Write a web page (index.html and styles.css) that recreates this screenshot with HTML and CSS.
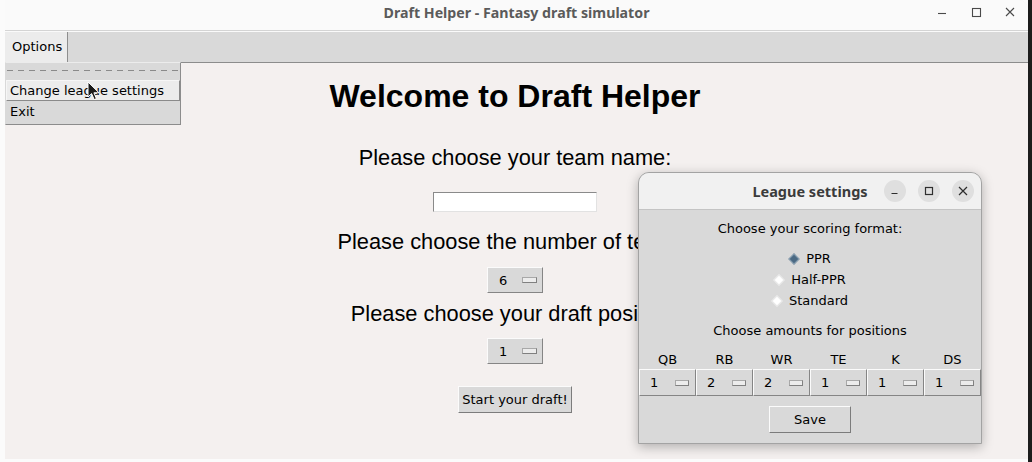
FILE: index.html
```html
<!DOCTYPE html>
<html>
<head>
<meta charset="utf-8">
<title>Draft Helper</title>
<link rel="stylesheet" href="styles.css">
</head>
<body>
<div class="screen">
  <div class="window">
    <header class="titlebar">
      <span></span>
      <span class="title">Draft Helper - Fantasy draft simulator</span>
      <div class="wm-controls">
        <svg class="wm-icon" viewBox="0 0 16 16"><path d="M4 8.5h8"/></svg>
        <svg class="wm-icon" viewBox="0 0 16 16"><rect x="4.5" y="3.5" width="8" height="8"/></svg>
        <svg class="wm-icon" viewBox="0 0 16 16"><path d="M4 3l8 8M12 3l-8 8"/></svg>
      </div>
    </header>
    <nav class="menubar">
      <div class="menu-btn">Options</div>
    </nav>
    <main class="content">
      <h1 class="heading">Welcome to Draft Helper</h1>
      <p class="label label-team">Please choose your team name:</p>
      <div class="entry"></div>
      <p class="label label-teams">Please choose the number of teams:</p>
      <div class="optmenu optmenu-main optmenu-teams"><span class="opt-val">6</span><i class="ind"></i></div>
      <p class="label label-pos">Please choose your draft position:</p>
      <div class="optmenu optmenu-main optmenu-pos"><span class="opt-val">1</span><i class="ind"></i></div>
      <div class="tk-button start-btn">Start your draft!</div>
    </main>
  </div>
  <div class="edge"></div>

  <div class="dropdown">
    <div class="tearoff"><div class="dash"></div></div>
    <div class="menu-item active">Change league settings</div>
    <div class="menu-item">Exit</div>
  </div>

  <section class="dialog">
    <header class="dlg-head">
      <span class="dlg-title">League settings</span>
      <div class="dlg-controls">
        <span class="dlg-circle"><svg viewBox="0 0 12 12"><path d="M2.5 8.5h6"/></svg></span>
        <span class="dlg-circle"><svg viewBox="0 0 12 12"><rect x="2.5" y="2.5" width="7" height="7"/></svg></span>
        <span class="dlg-circle"><svg viewBox="0 0 12 12"><path d="M2 2l8 8M10 2l-8 8"/></svg></span>
      </div>
    </header>
    <div class="dlg-body">
      <div class="dlg-line">Choose your scoring format:</div>
      <div class="radios">
        <div class="radio"><i class="diamond on"></i><span>PPR</span></div>
        <div class="radio"><i class="diamond"></i><span>Half-PPR</span></div>
        <div class="radio"><i class="diamond"></i><span>Standard</span></div>
      </div>
      <div class="dlg-line amounts">Choose amounts for positions</div>
      <div class="positions">
        <div class="pos"><div class="pos-label">QB</div><div class="optmenu optmenu-dlg"><span class="opt-val">1</span><i class="ind"></i></div></div>
        <div class="pos"><div class="pos-label">RB</div><div class="optmenu optmenu-dlg"><span class="opt-val">2</span><i class="ind"></i></div></div>
        <div class="pos"><div class="pos-label">WR</div><div class="optmenu optmenu-dlg"><span class="opt-val">2</span><i class="ind"></i></div></div>
        <div class="pos"><div class="pos-label">TE</div><div class="optmenu optmenu-dlg"><span class="opt-val">1</span><i class="ind"></i></div></div>
        <div class="pos"><div class="pos-label">K</div><div class="optmenu optmenu-dlg"><span class="opt-val">1</span><i class="ind"></i></div></div>
        <div class="pos"><div class="pos-label">DS</div><div class="optmenu optmenu-dlg"><span class="opt-val">1</span><i class="ind"></i></div></div>
      </div>
      <div class="tk-button save-btn">Save</div>
    </div>
  </section>

  <svg class="cursor" viewBox="0 0 13 20" width="13" height="20"><path d="M1 1v15l3.6-3.4 2.6 6 2.2-1-2.5-5.8H12z"/></svg>
</div>
</body>
</html>
```

FILE: styles.css
```css
* { box-sizing: border-box; }

html, body {
  margin: 0;
  padding: 0;
}

body {
  width: 1032px;
  height: 462px;
  overflow: hidden;
  background: #fbfbfb;
  font-family: "DejaVu Sans", sans-serif;
  font-size: 13px;
  color: #000;
}

.screen {
  position: relative;
  display: flex;
  width: 1032px;
  height: 462px;
}

.window {
  margin-left: 5px;
  width: 1023px;
  height: 459px;
  display: flex;
  flex-direction: column;
  background: #f4f0ef;
  border-top-right-radius: 9px;
  overflow: hidden;
}

.edge {
  flex: 1;
  background: #1c1c1c;
}

/* title bar */
.titlebar {
  height: 31px;
  padding-bottom: 5px;
  background: #fafafa;
  border-bottom: 1px solid #d4d4d4;
  display: grid;
  grid-template-columns: 1fr auto 1fr;
  align-items: center;
}

.title {
  font-family: "Noto Sans", sans-serif;
  font-weight: 700;
  font-size: 14.2px;
  color: #5b5b5b;
}

.wm-controls {
  justify-self: end;
  display: flex;
  gap: 18px;
  padding-right: 10px;
}

.wm-icon {
  width: 16px;
  height: 16px;
  fill: none;
  stroke: #4a4a4a;
  stroke-width: 1.1;
}

/* menubar */
.menubar {
  height: 32px;
  border-top: 1px solid #fafafa;
  background: #d9d9d9;
  border-bottom: 1px solid #8c8c8c;
  display: flex;
}

.menu-btn {
  width: 63px;
  padding-left: 7px;
  line-height: 29px;
  background: #ececec;
  border-right: 1px solid #8e8e8e;
}

/* main content */
.content {
  flex: 1;
  display: flex;
  flex-direction: column;
  align-items: center;
  padding-right: 3px;
}

.heading {
  margin: 15px 0 0;
  font-family: "Liberation Sans", Arial, sans-serif;
  font-weight: 700;
  font-size: 32px;
  line-height: 37px;
  white-space: nowrap;
}

.label {
  margin: 0;
  font-family: "Liberation Sans", Arial, sans-serif;
  font-size: 21.8px;
  line-height: 25px;
  white-space: nowrap;
}

.label-team { margin-top: 30px; }
.label-teams { margin-top: 17px; }
.label-pos { margin-top: 8px; }

.entry {
  margin-top: 22px;
  width: 164px;
  height: 20px;
  background: #fff;
  border: 1px solid;
  border-color: #8a8a8a #e2e2e2 #e2e2e2 #8a8a8a;
}

.optmenu {
  display: flex;
  align-items: center;
  justify-content: space-between;
  background: #d9d9d9;
  border: 1px solid;
  border-color: #fbfbfb #858585 #858585 #fbfbfb;
}

.optmenu-main {
  width: 56px;
  height: 26px;
  padding: 0 5px 0 11px;
}

.optmenu-teams { margin-top: 13px; }
.optmenu-pos { margin-top: 12px; }

.ind {
  display: block;
  width: 15px;
  height: 6px;
  background: #ececec;
  border: 1px solid;
  border-color: #a8a8a8 #808080 #808080 #a8a8a8;
}

.tk-button {
  background: #d9d9d9;
  border: 1px solid;
  border-color: #fbfbfb #7c7c7c #7c7c7c #fbfbfb;
  text-align: center;
}

.start-btn {
  margin-top: 22px;
  width: 114px;
  height: 27px;
  line-height: 25px;
}

/* dropdown menu */
.dropdown {
  position: absolute;
  left: 5px;
  top: 62px;
  width: 176px;
  height: 63px;
  background: #d9d9d9;
  border: 1px solid;
  border-color: #ececec #8c8c8c #8c8c8c #d9d9d9;
  padding: 0 0 2px 0;
}

.tearoff {
  height: 17px;
  padding: 7px 2px 0 1px;
}

.dash {
  height: 1px;
  background: repeating-linear-gradient(90deg, #8a8a8a 0 6px, transparent 6px 11px);
}

.menu-item {
  height: 21px;
  line-height: 19px;
  padding-left: 3px;
  border: 1px solid transparent;
  white-space: nowrap;
}

.menu-item.active {
  background: #ececec;
  border-color: #f6f6f6 #8a8a8a #8a8a8a #f6f6f6;
}

/* dialog */
.dialog {
  position: absolute;
  left: 638px;
  top: 172px;
  width: 344px;
  height: 272px;
  border: 1px solid #a3a3a3;
  border-radius: 11px 11px 0 0;
  background: #d9d9d9;
  box-shadow: 0 3px 12px rgba(0, 0, 0, 0.28);
  display: flex;
  flex-direction: column;
  overflow: hidden;
}

.dlg-head {
  height: 37px;
  flex: none;
  background: #f1f1f1;
  border-bottom: 1px solid #c4c4c4;
  display: grid;
  grid-template-columns: 1fr auto 1fr;
  align-items: center;
  padding-bottom: 1px;
}

.dlg-title {
  grid-column: 2;
  font-family: "Noto Sans", sans-serif;
  font-weight: 700;
  font-size: 14.5px;
  color: #3b3b3b;
}

.dlg-controls {
  grid-column: 3;
  justify-self: end;
  display: flex;
  gap: 12px;
  padding-right: 7px;
}

.dlg-circle {
  width: 22px;
  height: 22px;
  border-radius: 50%;
  background: #dfdfdf;
  display: flex;
  align-items: center;
  justify-content: center;
}

.dlg-circle svg {
  width: 12px;
  height: 12px;
  fill: none;
  stroke: #2e2e2e;
  stroke-width: 1.2;
}

.dlg-body {
  flex: 1;
  display: flex;
  flex-direction: column;
  align-items: center;
  padding-top: 8px;
}

.dlg-line {
  line-height: 21px;
  white-space: nowrap;
}

.radios {
  margin-top: 9px;
  display: flex;
  flex-direction: column;
  align-items: center;
}

.radio {
  display: flex;
  align-items: center;
  gap: 7px;
  height: 21px;
  line-height: 21px;
}

.diamond {
  display: block;
  width: 8px;
  height: 8px;
  margin: 0 1px;
  transform: rotate(45deg);
  background: #fff;
  border: 1px solid #e8e8e8;
}

.diamond.on {
  background: #4b6a84;
  border-color: #8aa0b2;
}

.amounts { margin-top: 9px; }

.positions {
  margin-top: 9px;
  width: 100%;
  display: grid;
  grid-template-columns: repeat(6, 1fr);
}

.pos {
  display: flex;
  flex-direction: column;
  align-items: center;
}

.pos-label {
  line-height: 19px;
}

.optmenu-dlg {
  width: 100%;
  height: 27px;
  padding: 0 6px 0 10px;
}

.optmenu-dlg .ind {
  width: 14px;
}

.save-btn {
  margin-top: 10px;
  width: 82px;
  height: 27px;
  line-height: 25px;
}

.cursor {
  position: absolute;
  left: 87px;
  top: 81px;
  fill: #1a1a1a;
  stroke: #fff;
  stroke-width: 1;
}
```
